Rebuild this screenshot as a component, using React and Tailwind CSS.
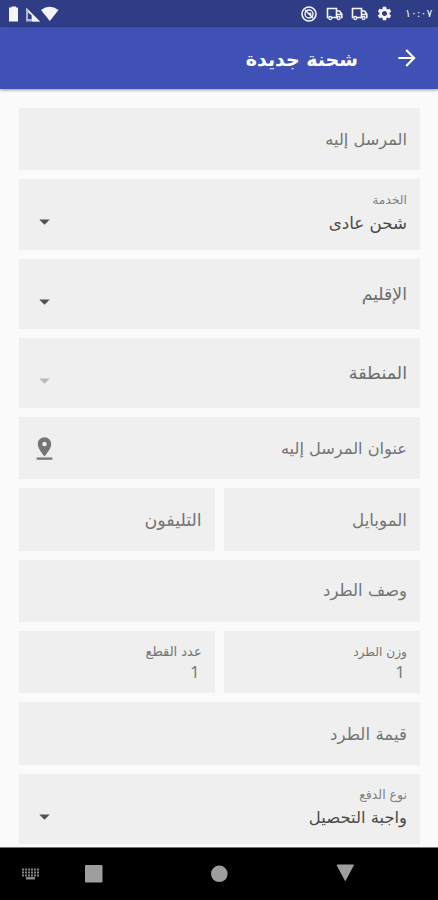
import { MdArrowDropDown, MdArrowForward, MdPinDrop, MdSettings } from 'react-icons/md';

function Truck() {
  return (
    <svg className="mr-[8px] h-[14px] w-[17px]" viewBox="0 0 17 14" fill="none" stroke="currentColor">
      <path d="M2.500 10.500H1.500v-9h9v9H6M10.500 4h3l2.300 3v3.500h-1M10.500 7.500h5" strokeWidth="1.600" />
      <circle cx="4.300" cy="11" r="1.500" strokeWidth="1.300" />
      <circle cx="12.600" cy="11" r="1.500" strokeWidth="1.300" />
    </svg>
  );
}

function StatusBar() {
  return (
    <div className="flex h-[27px] shrink-0 items-center bg-[#2f3c86] text-[#f4f5fb]">
      <svg className="ml-[8px] h-[18px] w-[52px]" viewBox="0 0 52 18" fill="currentColor">
        <path d="M3.500 2.500V1.500h4.500v1h2v14H1v-14z" />
        <path d="M18 2.500 32 16.500H18z" opacity="0.65" />
        <path d="M18 2.500 32 16.500H24V12z" />
        <path d="M20 8v6h3.500V10z" fill="#2f3c86" />
        <path d="M33 5Q41.500-1.500 50.500 5L41.800 16z" />
      </svg>
      <div className="mr-[6px] ml-auto flex items-center">
        <svg className="mr-[9px] h-4 w-4" viewBox="0 0 16 16" fill="none" stroke="currentColor">
          <circle cx="8" cy="8" r="7" strokeWidth="1.600" />
          <circle cx="8" cy="8" r="4" strokeWidth="1.400" />
          <path d="M4 4l8 8M7 7.500h2.500v2" strokeWidth="1.600" />
        </svg>
        <Truck />
        <Truck />
        <MdSettings className="mr-[12px] size-[17px]" />
        <span className="w-[27px] text-[11px] leading-none whitespace-nowrap" dir="ltr">١٠:٠٧</span>
      </div>
    </div>
  );
}

function Field({ label, value, icon, labelClass = 'text-[16.200px]' }) {
  return (
    <div className="flex h-[62.300px] flex-1 items-center justify-between bg-[#efefef] px-[13.300px] text-[#757575]">
      {value ? (
        <div className="-mt-[2px] flex flex-col">
          <span className={`leading-[20px] whitespace-nowrap ${labelClass}`}>{label}</span>
          <span className="pr-[2px] font-['Open_Sans'] text-[17px] leading-[19px] font-medium">{value}</span>
        </div>
      ) : (
        <span className={`pt-[1px] leading-[24px] whitespace-nowrap ${labelClass}`}>{label}</span>
      )}
      {icon}
    </div>
  );
}

function Select({ label, value, disabled, labelClass = 'text-[16px]', valueClass = 'text-[16.200px]' }) {
  return (
    <div className="flex h-[70.300px] items-center justify-between bg-[#efefef] px-[13.300px] text-[#6c6c6c]">
      {value ? (
        <div className="-mt-[2px] flex flex-col">
          <span className={`leading-[20px] whitespace-nowrap text-[#808080] ${labelClass}`}>{label}</span>
          <span className={`leading-[26px] whitespace-nowrap text-[#4a4a4a] ${valueClass}`}>{value}</span>
        </div>
      ) : (
        <span className={`leading-[24px] whitespace-nowrap ${labelClass}`}>{label}</span>
      )}
      <MdArrowDropDown className={`mt-[15px] size-[25px] ${disabled ? 'text-[#bababa]' : 'text-[#505050]'}`} />
    </div>
  );
}

function NavBar() {
  return (
    <div className="h-[53px] shrink-0 border-t border-[#777] bg-black">
      <svg className="h-[52px] w-[438px]" viewBox="0 0 438 52" fill="#9e9e9e">
        <path
          d="M22 21.500h18M22 24.500h18M22 27.500h18"
          fill="none"
          stroke="#858585"
          strokeWidth="2"
          strokeDasharray="2 1"
        />
        <path d="M26 29h9v2.500h-9z" fill="#858585" />
        <rect x="85" y="17" width="17.500" height="17.500" rx="1" />
        <circle cx="219.300" cy="25.800" r="8.300" />
        <path d="M337 17h16.500l-8.200 15.500z" stroke="#9e9e9e" strokeLinejoin="round" />
      </svg>
    </div>
  );
}

export default function App() {
  return (
    <div className="flex h-[900px] w-[438px] flex-col overflow-hidden bg-[#fafafa] font-['DejaVu_Sans',sans-serif]">
      <StatusBar />
      <header
        dir="rtl"
        className="z-10 flex h-[62px] shrink-0 items-center bg-[#3f51b5] pr-[18px] text-white shadow-[0_1px_3px_rgba(0,0,0,0.4)]"
      >
        <MdArrowForward className="size-[26px] text-white" />
        <h1 className="mt-[2px] mr-[36px] text-[19px] leading-none font-bold whitespace-nowrap">شحنة جديدة</h1>
      </header>

      <main
        dir="rtl"
        className="flex min-h-0 flex-1 flex-col gap-[9px] overflow-hidden pt-[19px] pr-[17.700px] pl-[18.700px]"
      >
        <div className="flex">
          <Field label="المرسل إليه" />
        </div>
        <Select label="الخدمة" value="شحن عادى" labelClass="text-[12.300px]" valueClass="text-[16.700px]" />
        <Select label="الإقليم" labelClass="text-[17.300px]" />
        <Select label="المنطقة" disabled labelClass="text-[17.500px]" />
        <div className="flex">
          <Field label="عنوان المرسل إليه" icon={<MdPinDrop className="-ml-px size-[27px]" />} />
        </div>
        <div className="flex gap-[9px]">
          <Field label="الموبايل" labelClass="text-[16.700px]" />
          <Field label="التليفون" labelClass="text-[17.500px]" />
        </div>
        <div className="flex">
          <Field label="وصف الطرد" labelClass="text-[16.500px]" />
        </div>
        <div className="flex gap-[9px]">
          <Field label="وزن الطرد" value="1" labelClass="text-[12.200px]" />
          <Field label="عدد القطع" value="1" labelClass="text-[13px]" />
        </div>
        <div className="flex">
          <Field label="قيمة الطرد" labelClass="text-[16.700px]" />
        </div>
        <Select label="نوع الدفع" value="واجبة التحصيل" labelClass="text-[12.500px]" valueClass="text-[16.400px]" />
      </main>

      <NavBar />
    </div>
  );
}
